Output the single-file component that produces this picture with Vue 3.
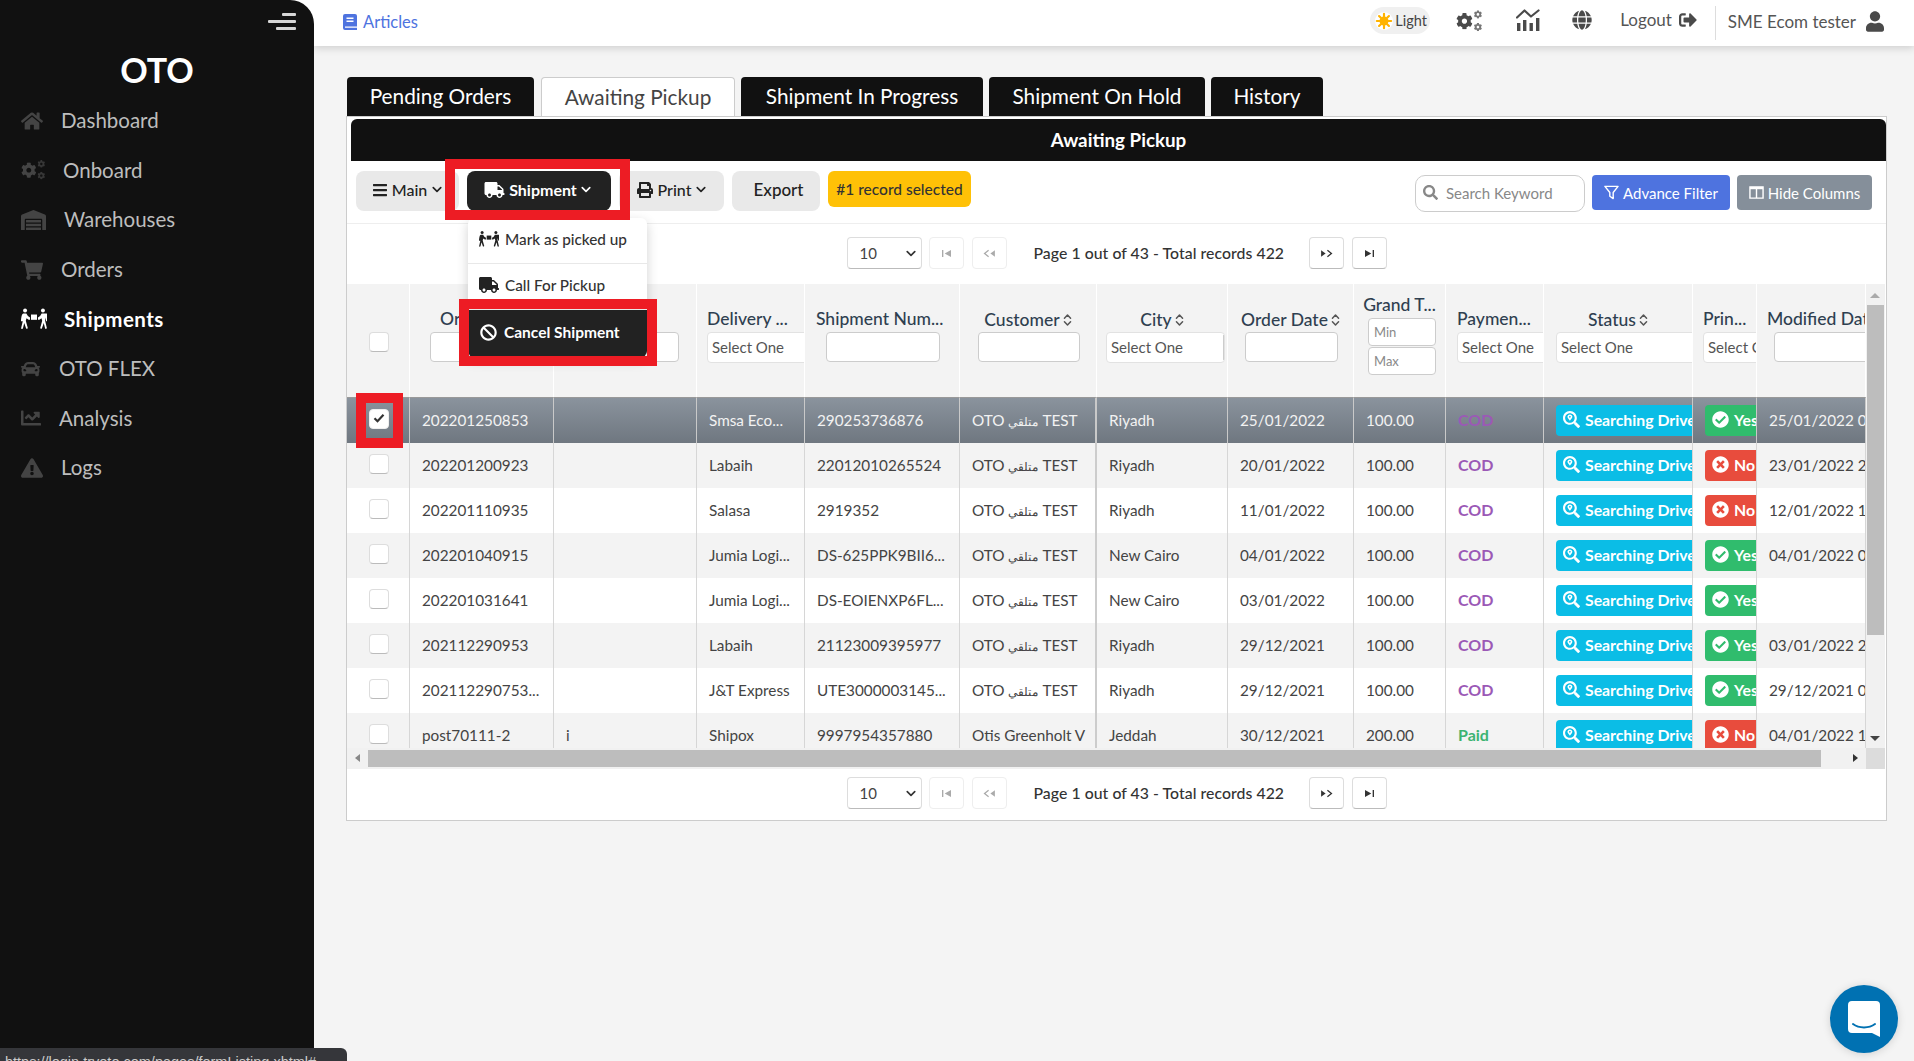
<script setup>
const nav = [
  { t: 'Dashboard', i: 'home', w: 22, gap: 18 },
  { t: 'Onboard', i: 'gears', w: 25, gap: 17 },
  { t: 'Warehouses', i: 'warehouse', w: 25, gap: 18 },
  { t: 'Orders', i: 'cart', w: 22, gap: 18 },
  { t: 'Shipments', i: 'people', w: 26, gap: 17, active: true },
  { t: 'OTO FLEX', i: 'car', w: 19, gap: 19 },
  { t: 'Analysis', i: 'chartline', w: 20, gap: 18 },
  { t: 'Logs', i: 'warn', w: 22, gap: 18 },
]
const tabs = [
  { t: 'Pending Orders', w: 187, gap: 7 },
  { t: 'Awaiting Pickup', w: 194, gap: 6, active: true },
  { t: 'Shipment In Progress', w: 242, gap: 6 },
  { t: 'Shipment On Hold', w: 216, gap: 6 },
  { t: 'History', w: 112, gap: 0 },
]
const colWidths = [63, 144, 143, 108, 155, 137, 131, 126, 92, 98, 149, 64, 109]
const heads = [
  { t: 'Order Number', kind: 'input', x: 20, w: 105, tx: 30 },
  { t: 'Reference', kind: 'input', x: 18, w: 107, tx: 20 },
  { t: 'Delivery ...', kind: 'select', x: 10, w: 120, tx: 10 },
  { t: 'Shipment Num...', kind: 'input', x: 21, w: 114, tx: 11 },
  { t: 'Customer', kind: 'input', x: 18, w: 102, sort: true },
  { t: 'City', kind: 'select', x: 9, w: 119, sort: true, divider: true },
  { t: 'Order Date', kind: 'input', x: 17, w: 93, sort: true },
  { t: 'Grand T...', kind: 'range' },
  { t: 'Paymen...', kind: 'select', x: 11, w: 100, tx: 11 },
  { t: 'Status', kind: 'select', x: 12, w: 160, sort: true },
  { t: 'Prin...', kind: 'select', x: 10, w: 80, tx: 10 },
  { t: 'Modified Date', kind: 'input', x: 17, w: 120, tx: 10 },
]
const rows = [
  { id: '202201250853', c: '', d: 'Smsa Eco...', s: '290253736876', ci: 'Riyadh', o: '25/01/2022', g: '100.00', p: 'COD', yes: true, m: '25/01/2022 0.', sel: true },
  { id: '202201200923', c: '', d: 'Labaih', s: '22012010265524', ci: 'Riyadh', o: '20/01/2022', g: '100.00', p: 'COD', yes: false, m: '23/01/2022 2.' },
  { id: '202201110935', c: '', d: 'Salasa', s: '2919352', ci: 'Riyadh', o: '11/01/2022', g: '100.00', p: 'COD', yes: false, m: '12/01/2022 1.' },
  { id: '202201040915', c: '', d: 'Jumia Logi...', s: 'DS-625PPK9BII6...', ci: 'New Cairo', o: '04/01/2022', g: '100.00', p: 'COD', yes: true, m: '04/01/2022 0.' },
  { id: '202201031641', c: '', d: 'Jumia Logi...', s: 'DS-EOIENXP6FL...', ci: 'New Cairo', o: '03/01/2022', g: '100.00', p: 'COD', yes: true, m: '' },
  { id: '202112290953', c: '', d: 'Labaih', s: '21123009395977', ci: 'Riyadh', o: '29/12/2021', g: '100.00', p: 'COD', yes: true, m: '03/01/2022 2.' },
  { id: '202112290753...', c: '', d: 'J&T Express', s: 'UTE3000003145...', ci: 'Riyadh', o: '29/12/2021', g: '100.00', p: 'COD', yes: true, m: '29/12/2021 0.' },
  { id: 'post70111-2', c: 'i', d: 'Shipox', s: '9997954357880', cu: 'Otis Greenholt V', ci: 'Jeddah', o: '30/12/2021', g: '200.00', p: 'Paid', yes: false, m: '04/01/2022 1.' },
]
</script>

<template>
  <div class="app">
    <svg class="sprite" aria-hidden="true">
      <symbol id="i-home" viewBox="0 0 576 512"><path d="M280.37 148.26L96 300.11V464a16 16 0 0 0 16 16l112.06-.29a16 16 0 0 0 15.92-16V368a16 16 0 0 1 16-16h64a16 16 0 0 1 16 16v95.64a16 16 0 0 0 16 16.05L464 480a16 16 0 0 0 16-16V300L295.67 148.26a12.19 12.19 0 0 0-15.3 0zM571.6 251.47L488 182.56V44.05a12 12 0 0 0-12-12h-56a12 12 0 0 0-12 12v72.61L318.47 43a48 48 0 0 0-61 0L4.34 251.47a12 12 0 0 0-1.6 16.9l25.5 31A12 12 0 0 0 45.15 301l235.22-193.74a12.19 12.19 0 0 1 15.3 0L530.9 301a12 12 0 0 0 16.9-1.6l25.5-31a12 12 0 0 0-1.7-16.93z"/></symbol>
      <symbol id="i-cog" viewBox="0 0 512 512"><path d="M487.4 315.7l-42.6-24.6c4.3-23.2 4.3-47 0-70.2l42.6-24.6c4.9-2.8 7.1-8.6 5.5-14-11.1-35.6-30-67.8-54.7-94.6-3.8-4.1-10-5.1-14.8-2.3L380.8 110c-17.9-15.4-38.5-27.3-60.8-35.1V25.8c0-5.6-3.9-10.5-9.4-11.7-36.7-8.2-74.3-7.8-109.2 0-5.5 1.2-9.4 6.1-9.4 11.7V75c-22.2 7.9-42.8 19.8-60.8 35.1L88.7 85.5c-4.9-2.8-11-1.9-14.8 2.3-24.7 26.7-43.6 58.9-54.7 94.6-1.7 5.4.6 11.2 5.5 14L67.3 221c-4.3 23.2-4.3 47 0 70.2l-42.6 24.6c-4.9 2.8-7.1 8.6-5.5 14 11.1 35.6 30 67.8 54.7 94.6 3.8 4.1 10 5.1 14.8 2.3l42.6-24.6c17.9 15.4 38.5 27.3 60.8 35.1v49.2c0 5.6 3.9 10.5 9.4 11.7 36.7 8.2 74.3 7.8 109.2 0 5.5-1.2 9.4-6.1 9.4-11.7v-49.2c22.2-7.9 42.8-19.8 60.8-35.1l42.6 24.6c4.9 2.8 11 1.9 14.8-2.3 24.7-26.7 43.6-58.9 54.7-94.6 1.5-5.5-.7-11.3-5.6-14.1zM256 336c-44.1 0-80-35.9-80-80s35.9-80 80-80 80 35.9 80 80-35.9 80-80 80z"/></symbol>
      <symbol id="i-gears" viewBox="0 0 640 512">
        <use href="#i-cog" x="0" y="60" width="400" height="400"/>
        <use href="#i-cog" x="420" y="0" width="200" height="200" opacity=".75"/>
        <use href="#i-cog" x="420" y="300" width="200" height="200" opacity=".75"/>
      </symbol>
      <symbol id="i-warehouse" viewBox="0 0 640 512"><path d="M504 352H136.4c-4.4 0-8 3.6-8 8l-.1 48c0 4.4 3.6 8 8 8H504c4.4 0 8-3.6 8-8v-48c0-4.4-3.6-8-8-8zm0 96H136.1c-4.4 0-8 3.6-8 8l-.1 48c0 4.4 3.6 8 8 8h368c4.4 0 8-3.6 8-8v-48c0-4.4-3.6-8-8-8zm0-192H136.6c-4.4 0-8 3.6-8 8l-.1 48c0 4.4 3.6 8 8 8H504c4.4 0 8-3.6 8-8v-48c0-4.4-3.6-8-8-8zm106.5-139L338.4 3.7a48.15 48.15 0 0 0-36.9 0L29.5 117C11.7 124.5 0 141.9 0 161.3V504c0 4.4 3.6 8 8 8h80c4.4 0 8-3.6 8-8V256c0-17.6 14.6-32 32.6-32h382.8c18 0 32.6 14.4 32.6 32v248c0 4.4 3.6 8 8 8h80c4.4 0 8-3.6 8-8V161.3c0-19.4-11.7-36.8-29.5-44.3z"/></symbol>
      <symbol id="i-cart" viewBox="0 0 576 512"><path d="M528.12 301.319l47.273-208C578.806 78.301 567.391 64 551.99 64H159.208l-9.166-44.81C147.758 8.021 137.93 0 126.529 0H24C10.745 0 0 10.745 0 24v16c0 13.255 10.745 24 24 24h69.883l70.248 343.435C147.325 417.1 136 435.222 136 456c0 30.928 25.072 56 56 56s56-25.072 56-56c0-15.674-6.447-29.835-16.824-40h209.647C430.447 426.165 424 440.326 424 456c0 30.928 25.072 56 56 56s56-25.072 56-56c0-22.172-12.888-41.332-31.579-50.405l5.517-24.276c3.413-15.018-8.002-29.319-23.403-29.319H218.117l-6.545-32h293.145c11.206 0 20.92-7.754 23.403-18.681z"/></symbol>
      <symbol id="i-people" viewBox="0 0 640 512">
        <circle cx="100" cy="48" r="48"/><circle cx="540" cy="48" r="48"/>
        <path d="M58 118h74l38 64 52 34v56h-34l-52-32-18 60 48 174c4 24-32 34-42 12l-44-130-32 130c-8 24-48 16-44-10l42-180V220L60 310H0c4-90 20-190 58-192z"/>
        <path d="M582 118h-74l-38 64-52 34v56h34l52-32 18 60-48 174c-4 24 32 34 42 12l44-130 32 130c8 24 48 16 44-10l-42-180V220l28 90h60c-4-90-20-190-58-192z"/>
        <path d="M246 146h148v130H246z"/>
      </symbol>
      <symbol id="i-car" viewBox="0 0 512 512"><path d="M499.99 176h-59.87l-16.64-41.6C406.38 91.63 365.57 64 319.5 64h-127c-46.06 0-86.88 27.63-103.99 70.4L71.87 176H12.01C4.2 176-1.53 183.34.37 190.91l6 24C7.7 220.25 12.5 224 18.01 224h20.07C24.65 235.73 16 252.78 16 272v48c0 16.12 6.16 30.67 16 41.93V416c0 17.67 14.33 32 32 32h32c17.67 0 32-14.33 32-32v-32h256v32c0 17.67 14.33 32 32 32h32c17.67 0 32-14.33 32-32v-54.07c9.84-11.25 16-25.8 16-41.93v-48c0-19.22-8.65-36.27-22.07-48H494c5.51 0 10.31-3.75 11.64-9.09l6-24c1.89-7.57-3.84-14.91-11.65-14.91zm-352.06-17.83c7.29-18.22 24.94-30.17 44.57-30.17h127c19.63 0 37.28 11.95 44.57 30.17L384 208H128l19.93-49.83zM96 319.8c-19.2 0-32-12.76-32-31.9S76.8 256 96 256s48 28.71 48 47.85-28.8 15.95-48 15.95zm320 0c-19.2 0-48 3.19-48-15.95S396.8 256 416 256s32 12.76 32 31.9-12.8 31.9-32 31.9z"/></symbol>
      <symbol id="i-chartline" viewBox="0 0 512 512"><path d="M496 384H64V80c0-8.84-7.16-16-16-16H16C7.16 64 0 71.16 0 80v336c0 17.67 14.33 32 32 32h464c8.84 0 16-7.16 16-16v-32c0-8.84-7.16-16-16-16zM464 96H345.94c-21.38 0-32.09 25.85-16.97 40.97l32.4 32.4L288 242.75l-73.37-73.37c-12.5-12.5-32.76-12.5-45.25 0l-68.69 68.69c-6.25 6.25-6.25 16.38 0 22.63l22.62 22.62c6.25 6.25 16.38 6.25 22.63 0L192 237.25l73.37 73.37c12.5 12.5 32.76 12.5 45.25 0l96-96 32.4 32.4c15.12 15.12 40.97 4.41 40.97-16.97V112c.01-8.84-7.15-16-15.99-16z"/></symbol>
      <symbol id="i-warn" viewBox="0 0 576 512"><path d="M569.517 440.013C587.975 472.007 564.806 512 527.94 512H48.054c-36.937 0-59.999-40.055-41.577-71.987L246.423 23.985c18.467-32.009 64.72-31.951 83.154 0l239.94 416.028zM288 354c-25.405 0-46 20.595-46 46s20.595 46 46 46 46-20.595 46-46-20.595-46-46-46zm-43.673-165.346l7.418 136c.347 6.364 5.609 11.346 11.982 11.346h48.546c6.373 0 11.635-4.982 11.982-11.346l7.418-136c.375-6.874-5.098-12.654-11.982-12.654h-63.383c-6.884 0-12.356 5.78-11.981 12.654z"/></symbol>
      <symbol id="i-bars" viewBox="0 0 448 512"><path d="M16 132h416c8.837 0 16-7.163 16-16V76c0-8.837-7.163-16-16-16H16C7.163 60 0 67.163 0 76v40c0 8.837 7.163 16 16 16zm0 160h416c8.837 0 16-7.163 16-16v-40c0-8.837-7.163-16-16-16H16c-8.837 0-16 7.163-16 16v40c0 8.837 7.163 16 16 16zm0 160h416c8.837 0 16-7.163 16-16v-40c0-8.837-7.163-16-16-16H16c-8.837 0-16 7.163-16 16v40c0 8.837 7.163 16 16 16z"/></symbol>
      <symbol id="i-user" viewBox="0 0 448 512"><path d="M224 256c70.7 0 128-57.3 128-128S294.7 0 224 0 96 57.3 96 128s57.3 128 128 128zm89.6 32h-16.7c-22.2 10.2-46.9 16-72.9 16s-50.6-5.8-72.9-16h-16.7C60.2 288 0 348.2 0 422.4V464c0 26.5 21.5 48 48 48h352c26.5 0 48-21.5 48-48v-41.6c0-74.2-60.2-134.4-134.4-134.4z"/></symbol>
      <symbol id="i-truck" viewBox="0 0 640 512"><path d="M624 352h-16V243.9c0-12.7-5.1-24.9-14.1-33.9L494 110.1c-9-9-21.2-14.1-33.9-14.1H416V48c0-26.5-21.5-48-48-48H48C21.5 0 0 21.5 0 48v320c0 26.5 21.5 48 48 48h16c0 53 43 96 96 96s96-43 96-96h128c0 53 43 96 96 96s96-43 96-96h48c8.8 0 16-7.2 16-16v-32c0-8.8-7.2-16-16-16zM160 464c-26.5 0-48-21.5-48-48s21.5-48 48-48 48 21.5 48 48-21.5 48-48 48zm320 0c-26.5 0-48-21.5-48-48s21.5-48 48-48 48 21.5 48 48-21.5 48-48 48zm80-208H416V144h44.1l99.9 99.9V256z"/></symbol>
      <symbol id="i-search" viewBox="0 0 512 512"><path d="M505 442.7L405.3 343c-4.5-4.5-10.6-7-17-7H372c27.6-35.3 44-79.7 44-128C416 93.1 322.9 0 208 0S0 93.1 0 208s93.1 208 208 208c48.3 0 92.7-16.4 128-44v16.3c0 6.4 2.5 12.5 7 17l99.7 99.7c9.4 9.4 24.6 9.4 33.9 0l28.3-28.3c9.4-9.4 9.4-24.6.1-34zM208 336c-70.7 0-128-57.2-128-128 0-70.7 57.2-128 128-128 70.7 0 128 57.2 128 128 0 70.7-57.2 128-128 128z"/></symbol>
      <symbol id="i-searchloc" viewBox="0 0 512 512"><path d="M505 442.7L405.3 343c-4.5-4.5-10.6-7-17-7H372c27.6-35.3 44-79.7 44-128C416 93.1 322.9 0 208 0S0 93.1 0 208s93.1 208 208 208c48.3 0 92.7-16.4 128-44v16.3c0 6.4 2.5 12.5 7 17l99.7 99.7c9.4 9.4 24.6 9.4 33.9 0l28.3-28.3c9.4-9.4 9.4-24.6.1-34zM208 352c-79.5 0-144-64.5-144-144S128.5 64 208 64s144 64.5 144 144-64.5 144-144 144zm0-248c-42 0-74 32-74 72 0 34 50 92 74 118 24-26 74-84 74-118 0-40-32-72-74-72zm0 100c-16 0-28-12-28-28s12-28 28-28 28 12 28 28-12 28-28 28z"/></symbol>
      <symbol id="i-check" viewBox="0 0 512 512"><path d="M504 256c0 136.967-111.033 248-248 248S8 392.967 8 256 119.033 8 256 8s248 111.033 248 248zM227.314 387.314l184-184c6.248-6.248 6.248-16.379 0-22.627l-22.627-22.627c-6.248-6.249-16.379-6.249-22.628 0L216 308.118l-70.059-70.059c-6.248-6.248-16.379-6.248-22.628 0l-22.627 22.627c-6.248 6.248-6.248 16.379 0 22.627l104 104c6.249 6.25 16.379 6.25 22.628.001z"/></symbol>
      <symbol id="i-times" viewBox="0 0 512 512"><path d="M256 8C119 8 8 119 8 256s111 248 248 248 248-111 248-248S393 8 256 8zm121.6 313.1c4.7 4.7 4.7 12.3 0 17L338 377.6c-4.7 4.7-12.3 4.7-17 0L256 312l-65.1 65.6c-4.7 4.7-12.3 4.7-17 0L134.4 338c-4.7-4.7-4.7-12.3 0-17l65.6-65-65.6-65.1c-4.7-4.7-4.7-12.3 0-17l39.6-39.6c4.7-4.7 12.3-4.7 17 0l65 65.7 65.1-65.6c4.7-4.7 12.3-4.7 17 0l39.6 39.6c4.7 4.7 4.7 12.3 0 17L312 256l65.6 65.1z"/></symbol>
      <symbol id="i-ban" viewBox="0 0 512 512"><path d="M256 8C119.034 8 8 119.033 8 256s111.034 248 248 248 248-111.034 248-248S392.967 8 256 8zm130.108 117.892c65.448 65.448 70 165.481 20.677 235.637L150.47 105.216c70.204-49.356 170.226-44.735 235.638 20.676zM125.892 386.108c-65.448-65.448-70-165.481-20.677-235.637L361.53 406.784c-70.203 49.356-170.226 44.736-235.638-20.676z"/></symbol>
      <symbol id="i-print" viewBox="0 0 512 512"><path d="M448 192V77.25c0-8.49-3.37-16.62-9.37-22.63L393.37 9.37c-6-6-14.14-9.37-22.63-9.37H96C78.33 0 64 14.33 64 32v160c-35.35 0-64 28.65-64 64v112c0 8.84 7.16 16 16 16h48v96c0 17.67 14.33 32 32 32h320c17.67 0 32-14.33 32-32v-96h48c8.84 0 16-7.16 16-16V256c0-35.35-28.65-64-64-64zm-64 256H128v-96h256v96zm0-224H128V64h192v48c0 8.84 7.16 16 16 16h48v96zm48 72c-13.25 0-24-10.75-24-24 0-13.26 10.75-24 24-24s24 10.74 24 24c0 13.25-10.75 24-24 24z"/></symbol>
      <symbol id="i-globe" viewBox="0 0 496 512"><path d="M336.5 160C322 70.7 287.8 8 248 8s-74 62.7-88.5 152h177zM152 256c0 22.2 1.2 43.5 3.3 64h185.3c2.1-20.5 3.3-41.8 3.3-64s-1.2-43.5-3.3-64H155.3c-2.1 20.5-3.3 41.8-3.3 64zm324.7-96c-28.6-67.9-86.5-120.4-158-141.6 24.4 33.8 41.2 84.7 50 141.6h108zM177.2 18.4C105.8 39.6 47.8 92.1 19.3 160h108c8.7-56.9 25.5-107.8 49.9-141.6zM487.4 192H372.7c2.1 21 3.3 42.5 3.3 64s-1.2 43-3.3 64h114.6c5.5-20.5 8.6-41.8 8.6-64s-3.1-43.5-8.5-64zM120 256c0-21.5 1.2-43 3.3-64H8.6C3.2 212.5 0 233.8 0 256s3.2 43.5 8.6 64h114.6c-2-21-3.2-42.5-3.2-64zm39.5 96c14.5 89.3 48.7 152 88.5 152s74-62.7 88.5-152h-177zm159.3 141.6c71.4-21.2 129.4-73.7 158-141.6h-108c-8.8 56.9-25.6 107.8-50 141.6zM19.3 352c28.6 67.9 86.5 120.4 158 141.6-24.4-33.8-41.2-84.7-50-141.6h-108z"/></symbol>
      <symbol id="i-logout" viewBox="0 0 512 512"><path d="M497 273L329 441c-15 15-41 4.5-41-17v-96H152c-13.3 0-24-10.7-24-24v-96c0-13.3 10.7-24 24-24h136V88c0-21.4 25.9-32 41-17l168 168c9.3 9.4 9.3 24.6 0 34zM192 436v-40c0-6.6-5.4-12-12-12H96c-17.7 0-32-14.3-32-32V160c0-17.7 14.3-32 32-32h84c6.6 0 12-5.4 12-12V76c0-6.6-5.4-12-12-12H96c-53 0-96 43-96 96v192c0 53 43 96 96 96h84c6.6 0 12-5.4 12-12z"/></symbol>
      <symbol id="i-stats" viewBox="0 0 24 22">
        <path d="M1 14h3.400v8H1zM7 11h3.400v11H7zM13.500 14h3.400v8h-3.400zM20 9h3.400v13H20z"/>
        <path d="M1 8.500 8.500 1.500l6.500 6 7.500-6" fill="none" stroke="currentColor" stroke-width="2.200" stroke-linecap="round" stroke-linejoin="round"/>
      </symbol>
      <symbol id="i-sort" viewBox="0 0 10 16">
        <path d="M1.500 6 5 2.200 8.500 6M1.500 10 5 13.800 8.500 10" fill="none" stroke="currentColor" stroke-width="1.700" stroke-linecap="round" stroke-linejoin="round"/>
      </symbol>
      <symbol id="i-chev" viewBox="0 0 12 8">
        <path d="M1.500 1.800 6 6.200l4.500-4.400" fill="none" stroke="currentColor" stroke-width="2" stroke-linecap="round" stroke-linejoin="round"/>
      </symbol>
      <symbol id="i-first" viewBox="0 0 12 10"><path d="M1 1h1.500v8H1zM11 1v8L4 5z"/></symbol>
      <symbol id="i-prev" viewBox="0 0 14 10"><path d="M13 1.500v7L8 5z"/><path d="M6 1.500 1.500 5 6 8.500" fill="none" stroke="currentColor" stroke-width="1.400"/></symbol>
      <symbol id="i-next" viewBox="0 0 14 10"><path d="M1 1.500v7L6 5z"/><path d="M8 1.500 12.500 5 8 8.500" fill="none" stroke="currentColor" stroke-width="1.400"/></symbol>
      <symbol id="i-last" viewBox="0 0 12 10"><path d="M11 1H9.500v8H11zM1 1v8l7-4z"/></symbol>
    </svg>

    <aside class="side-wrap">
      <div class="sidebar">
        <div class="burger"><i class="b1"></i><i class="b2"></i><i class="b3"></i></div>
        <div class="brand">OTO</div>
        <nav class="nav">
          <div v-for="n in nav" :key="n.t" class="nav-item" :class="{ on: n.active }">
            <svg class="nav-ic" :style="{ width: n.w + 'px', marginRight: n.gap + 'px' }"><use :href="'#i-' + n.i"/></svg>
            <span>{{ n.t }}</span>
          </div>
        </nav>
      </div>
    </aside>

    <div class="main">
      <header class="topbar">
        <div class="articles">
          <svg class="art-ic" viewBox="0 0 14 16"><path d="M2 0h10a2 2 0 0 1 2 2v14H2a2 2 0 0 1-2-2V2a2 2 0 0 1 2-2z"/><path d="M3.500 3.500h7v1.500h-7zM3.500 6.500h7V8h-7zM2 12.500h12v1.200H2z" fill="#fff"/></svg>
          <span>Articles</span>
        </div>
        <div class="top-right">
          <div class="light">
            <span class="sun">
              <svg viewBox="0 0 20 20"><g stroke="#ffb300" stroke-width="2.400" stroke-linecap="round"><path d="M10 2v3M10 15v3M2 10h3M15 10h3M4.500 4.500l2 2M13.500 13.500l2 2M4.500 15.500l2-2M13.500 6.500l2-2"/></g><circle cx="10" cy="10" r="5" fill="#ffb300"/></svg>
            </span>
            <span>Light</span>
          </div>
          <svg class="t-ic gears"><use href="#i-gears"/></svg>
          <svg class="t-ic stats"><use href="#i-stats"/></svg>
          <svg class="t-ic globe"><use href="#i-globe"/></svg>
          <div class="logout">Logout <svg class="t-ic lo"><use href="#i-logout"/></svg></div>
          <div class="user"><span>SME Ecom tester</span><svg class="t-ic usr"><use href="#i-user"/></svg></div>
        </div>
      </header>

      <section class="content">
        <div class="tabs">
          <div v-for="t in tabs" :key="t.t" class="tab" :class="{ on: t.active }" :style="{ width: t.w + 'px', marginRight: t.gap + 'px' }">{{ t.t }}</div>
        </div>

        <div class="panel">
          <div class="panel-title">Awaiting Pickup</div>

          <div class="toolbar">
            <div class="btn b-main"><svg class="bi bars"><use href="#i-bars"/></svg>Main<svg class="chev"><use href="#i-chev"/></svg></div>
            <div class="ship-wrap">
              <div class="btn b-ship"><svg class="bi truck"><use href="#i-truck"/></svg>Shipment<svg class="chev"><use href="#i-chev"/></svg></div>
              <div class="red red-ship"></div>
              <div class="menu">
                <div class="mi"><svg class="mi-ic"><use href="#i-people"/></svg>Mark as picked up</div>
                <div class="mi"><svg class="mi-ic"><use href="#i-truck"/></svg>Call For Pickup</div>
                <div class="mi cancel"><svg class="ban"><use href="#i-ban"/></svg>Cancel Shipment</div>
                <div class="red red-cancel"></div>
              </div>
            </div>
            <div class="btn b-print"><svg class="bi print"><use href="#i-print"/></svg>Print<svg class="chev"><use href="#i-chev"/></svg></div>
            <div class="btn b-export">Export</div>
            <div class="selected">#1 record selected</div>
            <div class="tool-right">
              <div class="search"><svg class="s-ic"><use href="#i-search"/></svg><span>Search Keyword</span></div>
              <div class="act blue">
                <svg class="a-ic" viewBox="0 0 16 16"><path d="M1 1.500h14L9.800 8v6.500L6.200 12V8z" fill="none" stroke="#fff" stroke-width="1.500" stroke-linejoin="round"/></svg>
                Advance Filter
              </div>
              <div class="act grey">
                <svg class="a-ic" viewBox="0 0 16 16"><path d="M1 2h14v12H1zM8 2v12" fill="none" stroke="#fff" stroke-width="1.500"/><path d="M1 2h14v2.500H1z" fill="#fff"/></svg>
                Hide Columns
              </div>
            </div>
          </div>

          <div class="pager top">
            <div class="psel"><span>10</span><svg class="chev dark"><use href="#i-chev"/></svg></div>
            <div class="pbtn off first"><svg class="p-ic"><use href="#i-first"/></svg></div>
            <div class="pbtn off"><svg class="p-ic"><use href="#i-prev"/></svg></div>
            <div class="ptext">Page 1 out of 43 - Total records 422</div>
            <div class="pbtn"><svg class="p-ic"><use href="#i-next"/></svg></div>
            <div class="pbtn"><svg class="p-ic"><use href="#i-last"/></svg></div>
          </div>

          <div class="grid-wrap">
            <div class="grid-left">
              <div class="viewport">
                <table class="grid">
                  <colgroup><col v-for="(w, i) in colWidths" :key="i" :style="{ width: w + 'px' }"/></colgroup>
                  <thead>
                    <tr>
                      <th class="th-check"><span class="cb"></span></th>
                      <th v-for="h in heads" :key="h.t" :class="{ sorted: h.sort, range: h.kind === 'range' }">
                        <div class="th-title" :style="h.tx ? { paddingLeft: h.tx + 'px', textAlign: 'left' } : null">
                          {{ h.t }}<svg v-if="h.sort" class="sort"><use href="#i-sort"/></svg>
                        </div>
                        <template v-if="h.kind === 'range'">
                          <div class="f-range">Min</div>
                          <div class="f-range">Max</div>
                        </template>
                        <div v-else-if="h.kind === 'input'" class="f-input" :style="{ marginLeft: h.x + 'px', width: h.w + 'px' }"></div>
                        <div v-else class="f-select" :class="{ divider: h.divider }" :style="{ marginLeft: h.x + 'px', width: h.w + 'px' }">Select One</div>
                      </th>
                    </tr>
                  </thead>
                  <tbody>
                    <tr v-for="r in rows" :key="r.id" :class="{ sel: r.sel }">
                      <td class="td-check"><span class="cb" :class="{ checked: r.sel }"><svg v-if="r.sel" viewBox="0 0 12 10"><path d="M1.500 5.200 4.500 8.200 10.500 1.800" fill="none" stroke="#333" stroke-width="2.200"/></svg></span><div v-if="r.sel" class="red red-check"></div></td>
                      <td>{{ r.id }}</td>
                      <td>{{ r.c }}</td>
                      <td>{{ r.d }}</td>
                      <td>{{ r.s }}</td>
                      <td class="thick"><template v-if="r.cu">{{ r.cu }}</template><template v-else>OTO <span class="ar">متلقي</span> TEST</template></td>
                      <td>{{ r.ci }}</td>
                      <td>{{ r.o }}</td>
                      <td>{{ r.g }}</td>
                      <td class="pay" :class="r.p === 'Paid' ? 'paid' : 'cod'">{{ r.p }}</td>
                      <td class="td-badge"><span class="badge cyan"><svg class="b-ic"><use href="#i-searchloc"/></svg>Searching Driver</span></td>
                      <td class="td-badge"><span class="badge" :class="r.yes ? 'green' : 'redb'"><svg class="b-ic"><use :href="r.yes ? '#i-check' : '#i-times'"/></svg>{{ r.yes ? 'Yes' : 'No' }}</span></td>
                      <td>{{ r.m }}</td>
                    </tr>
                  </tbody>
                </table>
              </div>
              <div class="hbar"><i class="arr-l"></i><div class="hthumb"></div><i class="arr-r"></i></div>
            </div>
            <div class="vbar">
              <div class="vtrack"><i class="arr-u"></i><div class="vthumb"></div><i class="arr-d"></i></div>
              <div class="corner"></div>
            </div>
          </div>

          <div class="pager bottom">
            <div class="psel"><span>10</span><svg class="chev dark"><use href="#i-chev"/></svg></div>
            <div class="pbtn off first"><svg class="p-ic"><use href="#i-first"/></svg></div>
            <div class="pbtn off"><svg class="p-ic"><use href="#i-prev"/></svg></div>
            <div class="ptext">Page 1 out of 43 - Total records 422</div>
            <div class="pbtn"><svg class="p-ic"><use href="#i-next"/></svg></div>
            <div class="pbtn"><svg class="p-ic"><use href="#i-last"/></svg></div>
          </div>
        </div>
      </section>
    </div>

    <div class="statusbar">https://login.tryoto.com/pages/formListing.xhtml#</div>
    <div class="chat">
      <svg viewBox="0 0 32 36"><path d="M4 0h24a4 4 0 0 1 4 4v32l-8-4H4a4 4 0 0 1-4-4V4a4 4 0 0 1 4-4z" fill="#fff"/><path d="M5 23c6 4.500 16 4.500 22 0" fill="none" stroke="#0071b2" stroke-width="2" stroke-linecap="round"/></svg>
    </div>
  </div>
</template>

<style>
html, body { margin: 0; padding: 0; background: #f4f4f4; overflow: hidden; }
</style>

<style scoped>
.app {
  display: flex;
  width: 1914px;
  height: 1061px;
  overflow: hidden;
  position: relative;
  background: #f4f4f4;
  font-family: "Lato", "Open Sans", "Noto Sans CJK SC", sans-serif;
  color: #444;
}
.sprite { position: absolute; width: 0; height: 0; overflow: hidden; }
svg { fill: currentColor; display: block; }

/* sidebar */
.side-wrap { width: 314px; flex: none; background: linear-gradient(#fff 46px, #f4f4f4 46px); position: relative; z-index: 3; }
.sidebar { height: 100%; background: #111; border-top-right-radius: 24px; padding-top: 13px; box-sizing: border-box; position: relative; }
.burger { display: flex; flex-direction: column; align-items: flex-end; gap: 4.5px; width: 296px; height: 17px; }
.burger i { display: block; height: 3px; background: #d6d6d6; border-radius: 1px; }
.b1 { width: 14px; }
.b2 { width: 28px; }
.b3 { width: 20px; }
.brand { color: #fff; font-size: 34px; font-weight: 700; text-align: center; line-height: 40px; margin-top: 20px; }
.nav { margin-top: 6px; padding-left: 21px; }
.nav-item { display: flex; align-items: center; height: 49.6px; color: #bdbdbd; font-size: 20.5px; }
.nav-item span { margin-bottom: 1px; }
.nav-ic { height: 24px; color: #444; flex: none; }
.nav-item.on { color: #fff; font-weight: 700; letter-spacing: .45px; }
.nav-item.on .nav-ic { color: #fff; }

/* top */
.main { flex: 1; min-width: 0; display: flex; flex-direction: column; }
.topbar { height: 46px; background: #fff; box-shadow: 0 2px 8px rgba(0,0,0,.16); display: flex; align-items: center; padding-left: 29px; position: relative; z-index: 2; }
.articles { display: flex; align-items: center; gap: 6px; color: #4e73df; font-size: 16.5px; margin-bottom: 3px; }
.art-ic { width: 14px; height: 16px; fill: #4e73df; }
.top-right { margin-left: auto; display: flex; align-items: center; height: 100%; padding-right: 30px; color: #555; }
.light { width: 60px; height: 27px; border-radius: 14px; background: #f0f0f0; display: flex; align-items: center; font-size: 14.5px; color: #444; gap: 2px; box-sizing: border-box; padding-left: 5px; margin-bottom: 5px; }
.sun { width: 18px; height: 18px; background: #fff; border-radius: 50%; flex: none; }
.t-ic { color: #4a4a4a; flex: none; }
.gears { width: 27px; height: 22px; margin-left: 26px; margin-bottom: 5px; }
.stats { width: 24px; height: 22px; margin-left: 33px; margin-bottom: 6px; }
.globe { width: 20px; height: 20px; margin-left: 32px; margin-bottom: 6px; }
.logout { display: flex; align-items: center; gap: 6px; font-size: 17px; margin-left: 28px; margin-bottom: 7px; }
.lo { width: 20px; height: 18px; }
.user { display: flex; align-items: center; border-left: 1px solid #ddd; height: 34px; margin-left: 17px; padding-left: 12px; font-size: 17px; gap: 10px; }
.user span { margin-bottom: 3px; }
.usr { width: 18px; height: 21px; margin-bottom: 4px; }

/* content */
.content { padding: 31px 27px 0 32px; }
.tabs { display: flex; margin-left: 1px; height: 39px; }
.tab { height: 39px; box-sizing: border-box; background: #111; color: #fff; font-size: 20.8px; display: flex; align-items: center; justify-content: center; border-radius: 4px 4px 0 0; padding-bottom: 2px; }
.tab.on { background: #fff; color: #444; border: 1px solid #ccc; border-bottom: 0; }

.panel { border: 1px solid #ccc; background: #fff; height: 705px; box-sizing: border-box; margin-top: 0; display: flex; flex-direction: column; position: relative; }
.panel-title { margin: 2px 0 0 4px; height: 42px; box-sizing: border-box; padding-bottom: 2px; background: #111; color: #fff; font-weight: 700; font-size: 18.8px; display: flex; align-items: center; justify-content: center; border-radius: 6px 6px 0 0; flex: none; }

.toolbar { height: 63px; box-sizing: border-box; border-bottom: 1px solid #eee; display: flex; align-items: flex-start; padding: 10px 14px 0 9px; gap: 8px; flex: none; position: relative; z-index: 4; }
.btn { height: 40px; border-radius: 8px; background: #e9e9e9; color: #222; font-size: 16px; display: flex; align-items: center; justify-content: center; box-sizing: border-box; flex: none; font-weight: 500; padding-bottom: 3px; }
.b-main { width: 103px; gap: 5px; }
.ship-wrap { position: relative; flex: none; }
.b-ship { width: 144px; background: #222; color: #fff; gap: 4px; font-weight: 700; padding-right: 3px; }
.b-print { width: 105px; gap: 5px; }
.b-export { width: 88px; font-weight: 500; font-size: 17px; padding-left: 5px; }
.bi { flex: none; height: 16px; }
.bars { width: 14px; }
.truck { width: 21px; }
.print { width: 16px; }
.chev { width: 10px; height: 7px; flex: none; }
.selected { height: 36px; width: 143px; border-radius: 6px; background: #ffc107; color: #333; font-size: 15.5px; display: flex; align-items: center; justify-content: center; flex: none; font-weight: 500; }
.tool-right { margin-left: auto; display: flex; gap: 7px; align-items: flex-start; padding-top: 4px; }
.search { width: 170px; height: 37px; box-sizing: border-box; border: 1px solid #ccc; border-radius: 10px; display: flex; align-items: center; padding: 0 0 2px 7px; gap: 8px; color: #888; font-size: 15px; }
.s-ic { width: 15px; height: 15px; color: #888; }
.act { height: 35px; border-radius: 4px; color: #fff; display: flex; align-items: center; justify-content: center; gap: 4px; font-size: 15px; box-sizing: border-box; }
.act.blue { width: 138px; background: #4e73df; }
.act.grey { width: 135px; background: #858f9a; }
.a-ic { width: 15px; height: 15px; flex: none; }

/* annotations */
.red { position: absolute; border: 10px solid #ed1c24; box-sizing: border-box; pointer-events: none; z-index: 6; }
.red-ship { left: -22px; top: -12px; width: 185px; height: 61px; }
.red-cancel { left: -9px; top: 81px; width: 198px; height: 67px; }
.red-check { left: 9px; top: -5px; width: 47px; height: 55px; }

.menu { position: absolute; left: 1px; top: 47px; width: 179px; background: #fff; border-radius: 6px; box-shadow: 0 4px 12px rgba(0,0,0,.18); z-index: 5; }
.mi { height: 46px; box-sizing: border-box; display: flex; align-items: center; padding: 0 0 3px 11px; gap: 6px; font-size: 15.3px; color: #333; border-bottom: 1px solid #e8e8e8; font-weight: 500; }
.mi-ic { width: 20px; height: 16px; color: #222; flex: none; }
.mi.cancel { background: #222; color: #fff; font-weight: 700; border-radius: 0 0 6px 6px; border: 0; height: 47px; padding-left: 12px; gap: 7px; font-size: 15.5px; }
.ban { width: 17px; height: 17px; flex: none; }

/* pager */
.pager { display: flex; align-items: flex-start; justify-content: center; flex: none; padding-left: 8px; }
.pager.top { height: 60px; padding-top: 13px; box-sizing: border-box; }
.pager.bottom { height: 50px; padding-top: 8px; box-sizing: border-box; }
.psel { width: 75px; height: 32px; box-sizing: border-box; border: 1px solid #ddd; border-bottom-color: #bbb; border-radius: 4px; display: flex; align-items: center; justify-content: space-between; padding: 0 5px 0 12px; font-size: 15px; color: #444; background: #fff; margin-right: 7px; }
.chev.dark { color: #333; }
.pbtn { width: 35px; height: 32px; box-sizing: border-box; border: 1px solid #ddd; border-bottom-color: #bbb; border-radius: 4px; display: flex; align-items: center; justify-content: center; color: #333; margin-right: 8px; background: #fff; }
.pbtn.off { border-color: #eee; color: #aaa; }
.p-ic { width: 13px; height: 9px; }
.ptext { width: 249px; font-size: 15.8px; line-height: 32px; color: #333; font-weight: 500; margin: 0 26px 0 19px; white-space: nowrap; letter-spacing: .05px; }

/* grid */
.grid-wrap { display: flex; height: 485px; flex: none; }
.grid-left { width: 1519px; flex: none; display: flex; flex-direction: column; }
.viewport { height: 464px; overflow: hidden; position: relative; }
.grid { width: 1519px; table-layout: fixed; border-collapse: separate; border-spacing: 0; }
th { height: 113px; box-sizing: border-box; background: #f3f3f3; border-right: 1px solid #fff; padding: 24px 0 0; vertical-align: top; overflow: hidden; font-weight: 500; color: #2f3f50; font-size: 17.5px; }
.th-check { padding-top: 48px; }
.th-title { height: 24px; line-height: 22px; white-space: nowrap; display: flex; align-items: center; justify-content: center; gap: 3px; overflow: hidden; }
.th-title[style] { display: block; }
.sort { width: 9px; height: 14px; flex: none; color: #555; }
th.range { padding-top: 9px; }
.f-input { height: 30px; box-sizing: border-box; background: #fff; border: 1px solid #ccc; border-radius: 4px; }
.f-select { height: 31px; box-sizing: border-box; background: #fff; border: 1px solid #e2e2e2; border-radius: 4px; font-size: 15px; font-weight: 400; color: #555; line-height: 28px; padding-left: 4px; text-align: left; white-space: nowrap; overflow: hidden; position: relative; }
.f-select.divider::after { content: ""; position: absolute; right: 0; top: 2px; bottom: 2px; width: 1px; background: #ccc; }
.f-range { width: 68px; height: 28px; margin: 1px 0 1px 14px; box-sizing: border-box; background: #fff; border: 1px solid #ccc; border-radius: 4px; font-size: 13px; font-weight: 400; color: #888; line-height: 26px; padding-left: 5px; text-align: left; }
td { height: 45px; box-sizing: border-box; padding: 0 0 2px 12px; border-right: 1px solid #d6d6d6; white-space: nowrap; overflow: hidden; font-size: 15.3px; color: #444; background: #fff; }
tbody tr:nth-child(even) td { background: #f3f3f3; }
tr.sel td { height: 46px; background: linear-gradient(#8a939d, #6f7780) !important; color: #f2f2f2; border-top: 1px solid #999; border-right-color: #c9c9c9; }
td.thick { border-right: 2px solid #ccc; }
.ar { font-size: 12px; }
.td-check { padding: 0 0 4px 22px; overflow: visible; position: relative; }
.td-badge { padding-bottom: 0; }
.cb { display: block; width: 20px; height: 20px; box-sizing: border-box; background: #fff; border: 1px solid #ddd; border-bottom-color: #bbb; border-radius: 4px; }
.th-check .cb { margin-left: 22px; }
.cb.checked { padding: 3px; border-color: #eee; }
td.cod { color: #9b59b6; font-weight: 700; font-size: 16px; }
td.paid { color: #3cb371; font-weight: 700; font-size: 16px; }
tr.sel td.cod { color: #9b59b6; }
.badge { display: flex; align-items: center; height: 31px; padding: 0 0 3px 7px; box-sizing: border-box; border-radius: 4px 0 0 4px; color: #fff; font-weight: 700; font-size: 15.8px; gap: 5px; white-space: nowrap; }
.b-ic { width: 17px; height: 17px; flex: none; }
.cyan { background: #0bbde6; width: 200px; }
.green { background: #30bc6d; width: 80px; }
.redb { background: #e84c3d; width: 80px; }

.hbar { height: 21px; background: #f1f1f1; position: relative; display: flex; align-items: center; }
.hthumb { position: absolute; left: 21px; width: 1453px; top: 2px; height: 17px; background: #bdbdbd; }
.arr-l { position: absolute; left: 8px; top: 6px; border: 4.5px solid transparent; border-left: 0; border-right: 5px solid #888; }
.arr-r { position: absolute; right: 8px; top: 6px; border: 4.5px solid transparent; border-right: 0; border-left: 5px solid #333; }
.vbar { width: 19px; flex: none; display: flex; flex-direction: column; }
.vtrack { flex: 1; background: #f1f1f1; position: relative; }
.vthumb { position: absolute; left: 1px; width: 17px; top: 21px; height: 330px; background: #bdbdbd; }
.arr-u { position: absolute; left: 4px; top: 9px; border: 5px solid transparent; border-top: 0; border-bottom: 5px solid #aaa; }
.arr-d { position: absolute; left: 4px; bottom: 7px; border: 5px solid transparent; border-bottom: 0; border-top: 5px solid #444; }
.corner { height: 21px; background: #dcdcdc; }

.statusbar { position: absolute; left: 0; bottom: 0; width: 347px; height: 13px; box-sizing: border-box; overflow: hidden; background: #35363a; color: #ccc; border-top-right-radius: 6px; font-size: 14.5px; line-height: 20px; padding: 4px 0 0 5px; white-space: nowrap; z-index: 9; font-family: "Liberation Sans", sans-serif; }
.chat { position: absolute; left: 1830px; top: 985px; width: 68px; height: 68px; border-radius: 50%; background: #0071b2; display: flex; align-items: center; justify-content: center; box-shadow: 0 1px 8px rgba(0,0,0,.15); }
.chat svg { width: 32px; height: 36px; }
</style>
